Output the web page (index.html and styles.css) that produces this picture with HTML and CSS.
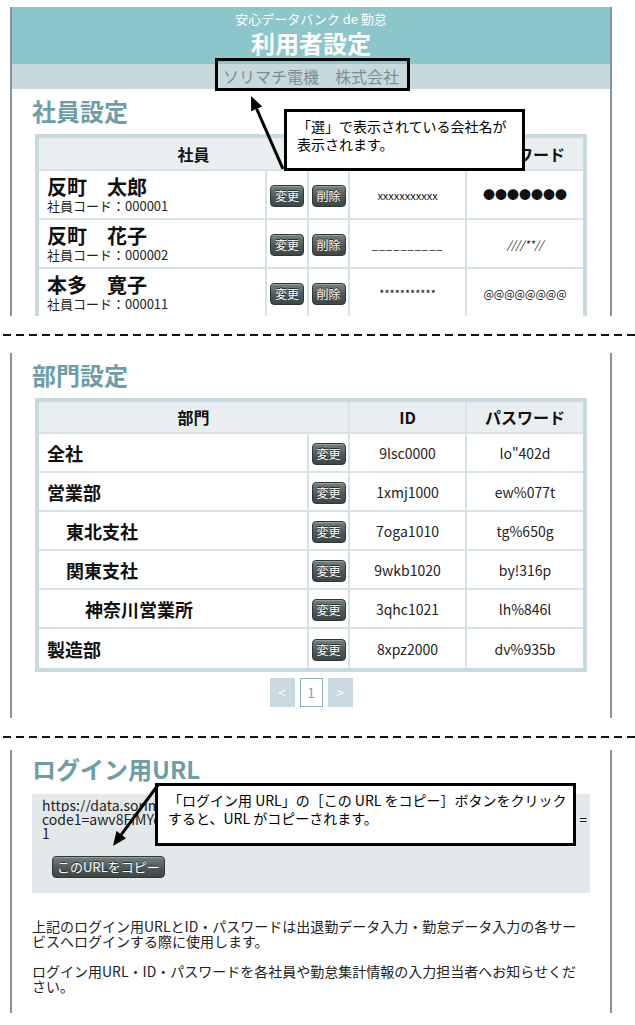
FILE: index.html
```html
<!DOCTYPE html>
<html lang="ja">
<head>
    <meta charset="UTF-8">
    <meta name="viewport" content="width=device-width, initial-scale=1.0">
    <title>利用者設定</title>
    <link rel="stylesheet" href="styles.css">
</head>
<body>
<div class="page">

    <!-- 社員設定 -->
    <section class="panel panel-staff">
        <header class="app-header">
            <div class="app-sub">安心データバンク de 勤怠</div>
            <h1 class="app-title">利用者設定</h1>
        </header>
        <div class="company-bar">ソリマチ電機　株式会社</div>
        <div class="panel-body">
            <h2 class="sec-title">社員設定</h2>
            <table class="grid staff-grid">
                <colgroup>
                    <col class="col-emp"><col class="col-btn"><col class="col-btn2"><col class="col-id"><col class="col-pw">
                </colgroup>
                <thead>
                    <tr><th colspan="3">社員</th><th>ID</th><th>パスワード</th></tr>
                </thead>
                <tbody>
                    <tr>
                        <td class="emp"><div class="emp-name">反町　太郎</div><div class="emp-code">社員コード：000001</div></td>
                        <td><button class="btn">変更</button></td>
                        <td><button class="btn">削除</button></td>
                        <td class="val">xxxxxxxxxxx</td>
                        <td class="val dots">●●●●●●●</td>
                    </tr>
                    <tr>
                        <td class="emp"><div class="emp-name">反町　花子</div><div class="emp-code">社員コード：000002</div></td>
                        <td><button class="btn">変更</button></td>
                        <td><button class="btn">削除</button></td>
                        <td class="val under">__________</td>
                        <td class="val slant">////**//</td>
                    </tr>
                    <tr>
                        <td class="emp"><div class="emp-name">本多　寛子</div><div class="emp-code">社員コード：000011</div></td>
                        <td><button class="btn">変更</button></td>
                        <td><button class="btn">削除</button></td>
                        <td class="val">***********</td>
                        <td class="val">@@@@@@@@</td>
                    </tr>
                </tbody>
            </table>
        </div>
    </section>

    <div class="cut"></div>

    <!-- 部門設定 -->
    <section class="panel panel-dept">
        <div class="panel-body">
            <h2 class="sec-title">部門設定</h2>
            <table class="grid dept-grid">
                <colgroup>
                    <col class="col-dept"><col class="col-btn2"><col class="col-id"><col class="col-pw">
                </colgroup>
                <thead>
                    <tr><th colspan="2">部門</th><th>ID</th><th>パスワード</th></tr>
                </thead>
                <tbody>
                    <tr><td class="dept">全社</td><td><button class="btn">変更</button></td><td class="code">9lsc0000</td><td class="code">lo"402d</td></tr>
                    <tr><td class="dept">営業部</td><td><button class="btn">変更</button></td><td class="code">1xmj1000</td><td class="code">ew%077t</td></tr>
                    <tr><td class="dept lv1">東北支社</td><td><button class="btn">変更</button></td><td class="code">7oga1010</td><td class="code">tg%650g</td></tr>
                    <tr><td class="dept lv1">関東支社</td><td><button class="btn">変更</button></td><td class="code">9wkb1020</td><td class="code">by!316p</td></tr>
                    <tr><td class="dept lv2">神奈川営業所</td><td><button class="btn">変更</button></td><td class="code">3qhc1021</td><td class="code">lh%846l</td></tr>
                    <tr><td class="dept">製造部</td><td><button class="btn">変更</button></td><td class="code">8xpz2000</td><td class="code">dv%935b</td></tr>
                </tbody>
            </table>
            <div class="pager">
                <span class="pg pg-off">&lt;</span>
                <span class="pg pg-cur">1</span>
                <span class="pg pg-off">&gt;</span>
            </div>
        </div>
    </section>

    <div class="cut cut-short"></div>

    <!-- ログイン用URL -->
    <section class="panel panel-login">
        <div class="panel-body">
            <h2 class="sec-title">ログイン用URL</h2>
            <div class="url-box">
                <div class="url-text">
                    <div class="url-line">https://data.sorimachi.co.jp/kintai/login.aspx?</div>
                    <div class="url-line url-wrap"><span class="url-fill">code1=awv8FiMYq2LkT7sRb4XnC9dHp3GzW6eJu1VmA5yNf8QcK0tSx4hBo7&amp;code2</span><span class="url-end">=</span></div>
                    <div class="url-line">1</div>
                </div>
                <button class="btn btn-copy">このURLをコピー</button>
            </div>
            <p class="note">上記のログイン用URLとID・パスワードは出退勤データ入力・勤怠データ入力の各サービスへログインする際に使用します。</p>
            <p class="note">ログイン用URL・ID・パスワードを各社員や勤怠集計情報の入力担当者へお知らせください。</p>
        </div>
    </section>

    <!-- annotations -->
    <div class="mark"></div>
    <div class="callout callout-company">「選」で表示されている会社名が<br>表示されます。</div>
    <div class="callout callout-url">「ログイン用 URL」の［この URL をコピー］ボタンをクリック<br>すると、URL がコピーされます。</div>
    <svg class="arrows" width="635" height="1025" viewBox="0 0 635 1025">
        <line x1="283" y1="169" x2="256.7" y2="108.8" stroke="#000" stroke-width="3"/>
        <polygon points="251,96 262.2,106.4 251.2,111.2" fill="#000"/>
        <line x1="158" y1="785" x2="121.3" y2="834.7" stroke="#000" stroke-width="3"/>
        <polygon points="113,846 126.1,838.3 116.5,831.1" fill="#000"/>
    </svg>
</div>
</body>
</html>
```

FILE: styles.css
```css
body {
    margin: 0;
    background-color: #fff;
    font-family: "Noto Sans CJK JP", "Noto Sans", sans-serif;
    color: #111;
}

.page {
    position: relative;
    width: 635px;
    height: 1025px;
    padding-top: 7px;
    box-sizing: border-box;
    overflow: hidden;
}

/* framed screen crops */
.panel {
    margin-left: 10px;
    width: 602px;
    box-sizing: border-box;
    border-left: 2px solid #8893a0;
    border-right: 2px solid #8893a0;
    overflow: hidden;
}
.panel-staff { height: 309px; }
.panel-dept { height: 365px; }
.panel-login { height: 263px; }

.cut {
    height: 2px;
    margin: 18px 0 17px;
    background-image: linear-gradient(to right, #111 8px, transparent 8px);
    background-size: 13px 2px;
    background-position: 3px 0;
}
.cut-short { margin-bottom: 12px; }

.app-header {
    background-color: #8cc6ca;
    height: 57px;
    box-sizing: border-box;
    padding-top: 3px;
    text-align: center;
    color: #fff;
}
.app-sub {
    font-size: 13px;
    line-height: 18px;
}
.app-title {
    margin: 0;
    font-size: 24px;
    line-height: 30px;
    font-weight: bold;
}
.company-bar {
    background-color: #c8d9dc;
    height: 25px;
    line-height: 25px;
    text-align: center;
    font-size: 16px;
    color: #7b8e92;
}

.panel-body {
    padding: 0 20px;
}
.sec-title {
    margin: 8px 0 9px;
    font-size: 24px;
    line-height: 28px;
    font-weight: bold;
    color: #6e9ea5;
}
.panel-login .sec-title {
    margin: 5px 0 11px;
}

/* tables */
.grid {
    width: 552px;
    margin-left: 3px;
    table-layout: fixed;
    border-collapse: separate;
    border-spacing: 0;
    border: 4px solid #c8dadf;
}
.grid th,
.grid td {
    padding: 0;
    border-right: 2px solid #d7e4e7;
    border-bottom: 2px solid #d7e4e7;
    text-align: center;
    vertical-align: middle;
}
.grid th:last-child,
.grid td:last-child { border-right: 0; }
.grid tbody tr:last-child td { border-bottom: 0; }
.grid th {
    background-color: #e9eff0;
    height: 31px;
    font-size: 16px;
    font-weight: bold;
}
.dept-grid th { height: 30px; }
.staff-grid td { height: 47px; }
.dept-grid td { height: 37px; }
.dept-grid tbody tr:last-child td { height: 39px; }

.col-emp { width: 228px; }
.col-dept { width: 270px; }
.col-btn { width: 42px; }
.col-btn2 { width: 41px; }
.col-id { width: 117px; }
.col-pw { width: 116px; }

.emp {
    text-align: left !important;
    padding-left: 8px !important;
}
.emp-name {
    font-size: 20px;
    line-height: 22px;
    font-weight: bold;
}
.emp-code {
    font-size: 13px;
    line-height: 15px;
    color: #222;
}
.val { font-size: 11px; }
.dots { font-size: 12px; }
.under { letter-spacing: 1px; }
.slant { font-style: italic; }

.dept {
    text-align: left !important;
    padding-left: 8px !important;
    font-size: 18px;
    font-weight: bold;
}
.dept.lv1 { padding-left: 27px !important; }
.dept.lv2 { padding-left: 46px !important; }
.code {
    font-size: 14px;
    color: #222;
}

.btn {
    display: inline-block;
    font-family: "Noto Sans CJK JP", sans-serif;
    font-size: 12px;
    line-height: 20px;
    padding: 0 4px;
    color: #fff;
    background: linear-gradient(#76817f, #4d5858 55%, #3d4747);
    border: 1px solid #2f3838;
    border-radius: 4px;
    text-shadow: 0 -1px 0 #1f2626;
    box-shadow: inset 0 1px 0 rgba(255,255,255,0.25);
    cursor: pointer;
}

.pager {
    display: flex;
    justify-content: center;
    gap: 5px;
    margin-top: 6px;
}
.pg {
    width: 25px;
    height: 29px;
    box-sizing: border-box;
    line-height: 29px;
    text-align: center;
    font-size: 14px;
}
.pg-off {
    background-color: #c8dadf;
    color: #fff;
}
.pg-cur {
    width: 23px;
    line-height: 27px;
    border: 1px solid #8fb0b5;
    background-color: #fff;
    color: #7fa1a6;
    font-size: 13px;
}

/* login url */
.url-box {
    background-color: #e3e9ea;
    padding: 4px 3px 15px 10px;
}
.url-text {
    font-size: 14px;
    line-height: 14px;
    color: #222;
}
.url-line {
    white-space: nowrap;
    overflow: hidden;
}
.url-wrap {
    display: flex;
}
.url-fill {
    flex: 1;
    min-width: 0;
    overflow: hidden;
}
.url-end {
    margin-left: 6px;
}
.btn-copy {
    margin: 16px 0 0 10px;
    font-size: 13px;
}
.note {
    margin: 26px 6px 0 0;
    font-size: 14px;
    line-height: 15px;
    color: #222;
}
.note + .note { margin-top: 15px; }

/* annotations */
.mark {
    position: absolute;
    left: 215px;
    top: 58px;
    width: 195px;
    height: 33px;
    box-sizing: border-box;
    border: 3px solid #000;
}
.callout {
    position: absolute;
    box-sizing: border-box;
    background-color: #fff;
    border: 3px solid #000;
    padding: 5px 8px 5px 10px;
    font-size: 14px;
    line-height: 18px;
    white-space: nowrap;
    color: #000;
}
.callout-company {
    left: 284px;
    top: 109px;
    width: 241px;
    height: 62px;
}
.callout-url {
    left: 155px;
    top: 783px;
    width: 421px;
    height: 63px;
}
.arrows {
    position: absolute;
    left: 0;
    top: 0;
    pointer-events: none;
}
```
